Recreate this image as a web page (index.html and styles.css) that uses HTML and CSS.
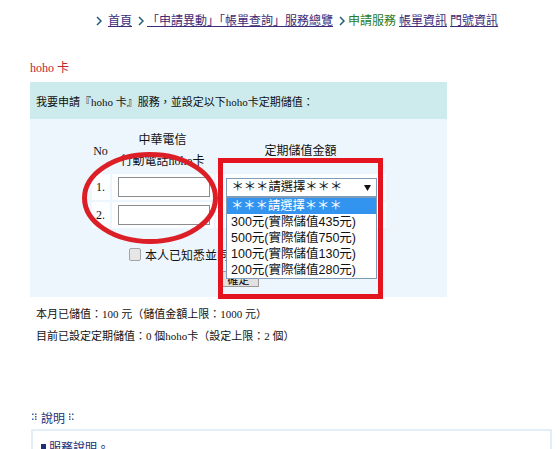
FILE: index.html
```html
<!DOCTYPE html>
<html lang="zh-Hant">
<head>
<meta charset="utf-8">
<title>hoho 卡</title>
<link rel="stylesheet" href="styles.css">
</head>
<body>
<div class="page">
  <nav class="crumbs">
    <svg class="chev" viewBox="0 0 6 10"><path d="M1 1 L5 5 L1 9"/></svg>
    <a href="#">首頁</a>
    <svg class="chev sep" viewBox="0 0 6 10"><path d="M1 1 L5 5 L1 9"/></svg>
    <a href="#" class="wide">「申請異動」「帳單查詢」服務總覽</a>
    <svg class="chev sep" viewBox="0 0 6 10"><path d="M1 1 L5 5 L1 9"/></svg>
    <span class="current">申請服務</span>
    <a href="#" class="tab">帳單資訊</a>
    <a href="#" class="tab">門號資訊</a>
  </nav>

  <h2 class="title">hoho 卡</h2>

  <div class="panel">
    <div class="panel-head">我要申請『hoho 卡』服務，並設定以下hoho卡定期儲值：</div>
    <div class="panel-body">
      <table class="form-table">
        <colgroup><col class="c-no"><col class="c-phone"><col class="c-amt"></colgroup>
        <thead>
          <tr><th>No</th><th>中華電信<br>行動電話hoho卡</th><th>定期儲值金額</th></tr>
        </thead>
        <tbody>
          <tr>
            <td class="no">1.</td>
            <td class="phone"><input type="text" class="tel"></td>
            <td class="amt">
              <div class="select">
                <span class="stars">＊＊＊請選擇＊＊＊</span>
                <svg class="arrow" viewBox="0 0 7 6"><path d="M0 0 H7 L3.5 6 Z"/></svg>
              </div>
            </td>
          </tr>
          <tr>
            <td class="no">2.</td>
            <td class="phone"><input type="text" class="tel"></td>
            <td class="amt"></td>
          </tr>
        </tbody>
      </table>

      <div class="agree"><span class="check"></span><span>本人已知悉並同意上述服務說明事項</span></div>
      <div class="actions"><button type="button" class="btn">確定</button></div>

      <svg class="mark-ellipse" viewBox="0 0 136 92"><ellipse cx="68" cy="46" rx="65.5" ry="43.5"/></svg>
      <div class="mark-rect"></div>
      <ul class="options">
        <li class="active stars">＊＊＊請選擇＊＊＊</li>
        <li>300元(實際儲值435元)</li>
        <li>500元(實際儲值750元)</li>
        <li>100元(實際儲值130元)</li>
        <li>200元(實際儲值280元)</li>
      </ul>
    </div>
  </div>

  <div class="stats">
    <div>本月已儲值：100 元（儲值金額上限：1000 元）</div>
    <div>目前已設定定期儲值：0 個hoho卡（設定上限：2 個）</div>
  </div>

  <div class="notes">
    <div class="notes-title">
      <svg class="dots" viewBox="0 0 5 8"><rect x="0" y="0.5" width="1.5" height="1.5"/><rect x="3" y="0.5" width="1.5" height="1.5"/><rect x="0" y="5.5" width="1.5" height="1.5"/><rect x="3" y="5.5" width="1.5" height="1.5"/><rect x="3" y="3" width="1.5" height="1.5"/></svg>
      <span>說明</span>
      <svg class="dots" viewBox="0 0 5 8"><rect x="0" y="0.5" width="1.5" height="1.5"/><rect x="3" y="0.5" width="1.5" height="1.5"/><rect x="0" y="5.5" width="1.5" height="1.5"/><rect x="3" y="5.5" width="1.5" height="1.5"/><rect x="0" y="3" width="1.5" height="1.5"/></svg>
    </div>
    <div class="notes-box">
      <div class="note-item"><span class="sq"></span>服務說明。</div>
    </div>
  </div>
</div>
</body>
</html>
```
FILE: styles.css
```css
* { box-sizing: border-box; }
html, body { margin: 0; background: #fff; }
body {
  font-family: "Liberation Serif", "Noto Sans CJK TC", serif;
  font-size: 12px;
  color: #111;
}
.page { width: 560px; height: 449px; overflow: hidden; }

/* breadcrumb */
.crumbs {
  display: flex;
  align-items: center;
  height: 29px;
  padding: 13px 0 0 96px;
  font-family: "Liberation Sans", "Noto Sans CJK TC", sans-serif;
  font-size: 12px;
  line-height: 16px;
}
.crumbs a { color: #3d2b78; text-decoration: underline; }
.crumbs .chev {
  width: 6px; height: 10px; margin-right: 6px;
  fill: none; stroke: #1f5c7c; stroke-width: 1.5;
}
.crumbs .chev.sep { margin-left: 6px; margin-right: 3px; }
.crumbs .current { color: #2b7a1c; }
.crumbs .tab { margin-left: 3px; }

.title {
  margin: 31px 0 6px 30px;
  font-size: 12px;
  line-height: 16px;
  font-weight: normal;
  color: #c1272d;
}

/* panel */
.panel { margin-left: 30px; width: 417px; }
.panel-head {
  height: 37px;
  display: flex;
  align-items: center;
  padding-left: 6px;
  background: #cdebed;
  font-size: 11px;
}
.panel-body {
  position: relative;
  height: 178px;
  padding-top: 9px;
  background: #eef6fd;
}

.form-table {
  table-layout: fixed;
  width: 298px;
  margin: 0 auto;
  border-spacing: 2px;
}
.c-no { width: 18px; }
.c-phone { width: 102px; }
.c-amt { width: 170px; }
.form-table th {
  height: 42px;
  padding: 0;
  font-weight: normal;
  font-size: 12px;
  line-height: 21px;
  vertical-align: middle;
  text-align: center;
  white-space: nowrap;
}
.form-table td {
  height: 26px;
  padding: 0;
  background: #fdfeff;
  vertical-align: middle;
}
.form-table td.no { text-align: center; font-size: 12px; }
.form-table td.phone { padding-left: 6px; }
.form-table td.amt { padding-left: 10px; }
.tel {
  display: block;
  width: 92px;
  height: 20px;
  margin: 0;
  border: 1px solid #8c8c8c;
  background: #fff;
  padding: 0;
}
.select {
  position: relative;
  width: 151px;
  height: 19px;
  border: 1px solid #7f9db9;
  background: #fff;
  display: flex;
  align-items: center;
  padding-left: 5px;
}
.stars {
  font-family: "Liberation Sans", "Noto Sans CJK TC", sans-serif;
  font-size: 12.3px;
  line-height: 16px;
}
.select .arrow {
  position: absolute;
  right: 5px;
  top: 6px;
  width: 7px;
  height: 6px;
  fill: #111;
}

.agree {
  display: flex;
  align-items: center;
  height: 16px;
  margin-top: 16px;
  padding-left: 99px;
  font-family: "Liberation Sans", "Noto Sans CJK TC", sans-serif;
  font-size: 12px;
}
.check {
  width: 12px;
  height: 13px;
  margin-right: 4px;
  border: 1px solid #a4a4a4;
  border-radius: 2px;
  background: #e6e6e6;
}
.actions { margin-top: 9px; }
.btn {
  display: block;
  width: 40px;
  height: 16px;
  margin: 0 auto;
  padding: 0;
  border: 1px solid #9a9a9a;
  background: #e1e1e1;
  font-family: "Noto Sans CJK TC", sans-serif;
  font-size: 11px;
  line-height: 14px;
}

/* annotations / open dropdown overlays */
.mark-ellipse {
  position: absolute;
  left: 52px;
  top: 33px;
  width: 136px;
  height: 92px;
  fill: none;
  stroke: #dc1f27;
  stroke-width: 5;
}
.mark-rect {
  position: absolute;
  left: 188px;
  top: 39px;
  width: 165px;
  height: 141px;
  border: 5px solid #e3141e;
}
.options {
  position: absolute;
  left: 196px;
  top: 78px;
  width: 151px;
  margin: 0;
  padding: 0;
  list-style: none;
  background: #fff;
  border: 1px solid #7f9db9;
  font-family: "Liberation Sans", "Noto Sans CJK TC", sans-serif;
  font-size: 12.5px;
}
.options li {
  height: 16px;
  line-height: 16px;
  padding-left: 4px;
  white-space: nowrap;
}
.options li.active { background: #3394f0; color: #fff; }

/* stats */
.stats {
  margin-top: 6px;
  padding-left: 36px;
  font-size: 11px;
  line-height: 22px;
}

/* notes */
.notes { margin-top: 62px; }
.notes-title {
  display: flex;
  align-items: center;
  height: 16px;
  padding-left: 32px;
  font-family: "Liberation Sans", "Noto Sans CJK TC", sans-serif;
  font-size: 12px;
  color: #1b2f77;
}
.notes-title span { margin: 0 4px; }
.dots { width: 5px; height: 8px; fill: #3d629c; }
.notes-box {
  margin: 4px 0 0 31px;
  width: 521px;
  height: 40px;
  border: 2px solid #e4eef7;
  border-bottom: none;
  padding: 7px 0 0 8px;
}
.note-item {
  display: flex;
  align-items: center;
  height: 16px;
  font-family: "Liberation Sans", "Noto Sans CJK TC", sans-serif;
  font-size: 12px;
  color: #1b2f77;
}
.sq {
  width: 5px;
  height: 5px;
  margin-right: 3px;
  background: #1b2f77;
}
```
